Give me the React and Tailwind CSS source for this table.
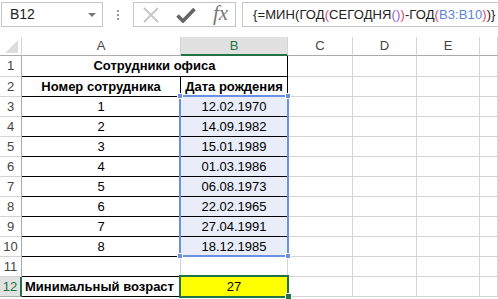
import React from "react";

// Spreadsheet view: formula bar + a small employee table with MIN(age) array formula
const colHeads = [
  { key: "A", w: "w-[159px]" },
  { key: "B", w: "w-[107px]", active: true },
  { key: "C", w: "w-[65px]" },
  { key: "D", w: "w-[64px]" },
  { key: "E", w: "w-[63px]" },
  { key: "", w: "flex-1" },
];

const people = [
  ["1", "12.02.1970"],
  ["2", "14.09.1982"],
  ["3", "15.01.1989"],
  ["4", "01.03.1986"],
  ["5", "06.08.1973"],
  ["6", "22.02.1965"],
  ["7", "27.04.1991"],
  ["8", "18.12.1985"],
];

const grid = "border-[#d4d4d4]";

function RowHead({ n, active }) {
  return (
    <div
      className={`w-[22px] shrink-0 flex items-center justify-center text-[13px] ${
        active
          ? "bg-[#e1e1e1] text-[#217346] border-r-2 border-r-[#217346] border-b border-b-[#ababab]"
          : "text-[#444] border-r border-b border-r-[#ababab] border-b-[#d4d4d4]"
      }`}
    >
      {n}
    </div>
  );
}

function Cell({ className = "", children }) {
  return (
    <div className={`shrink-0 flex items-center justify-center border-r border-b ${className}`}>
      {children}
    </div>
  );
}

function EmptyTail() {
  return (
    <>
      <Cell className={`w-[65px] ${grid}`} />
      <Cell className={`w-[64px] ${grid}`} />
      <Cell className={`w-[63px] ${grid}`} />
      <Cell className={`flex-1 ${grid}`} />
    </>
  );
}

function Formula() {
  const red = "text-[#e2436b]";
  return (
    <span className="text-[13px] text-[#222] whitespace-nowrap tracking-[0.1px]">
      {"{=МИН(ГОД"}
      <span className={red}>(</span>
      СЕГОДНЯ
      <span className="text-[#9b59d0]">()</span>
      <span className={red}>)</span>
      -ГОД
      <span className={red}>(</span>
      <span className="text-[#5b84e0]">B3:B10</span>
      <span className={red}>)</span>
      {")}"}
    </span>
  );
}

export default function App() {
  return (
    <div className="w-[498px] h-[299px] bg-white overflow-hidden font-['Liberation_Sans',sans-serif] text-black">
      {/* formula bar */}
      <div className="flex h-[25px] mt-[2px]">
        <div className="ml-[1px] w-[102px] border border-[#c6c6c6] flex items-center justify-between pl-[8px] pr-[6px]">
          <span className="text-[14px] text-[#222]">B12</span>
          <span className="w-0 h-0 border-l-[4px] border-r-[4px] border-t-[4px] border-l-transparent border-r-transparent border-t-[#777]" />
        </div>
        <div className="w-[30px] flex flex-col items-center justify-center gap-[2px]">
          <span className="w-[2px] h-[2px] bg-[#999]" />
          <span className="w-[2px] h-[2px] bg-[#999]" />
          <span className="w-[2px] h-[2px] bg-[#999]" />
        </div>
        <div className="w-[103px] border border-[#c6c6c6] flex items-center pl-[9px] gap-[17px]">
          <svg width="16" height="16" viewBox="0 0 16 16">
            <path d="M1 1L15 15M15 1L1 15" stroke="#c8c8c8" strokeWidth="2" fill="none" />
          </svg>
          <svg width="20" height="16" viewBox="0 0 20 16">
            <path d="M1.5 8.5L7 14L18.5 2" stroke="#666" strokeWidth="3.6" fill="none" />
          </svg>
          <span className="font-['Liberation_Serif',serif] italic text-[21px] leading-none text-[#777] -mt-[2px]">fx</span>
        </div>
        <div className="ml-[6px] flex-1 border border-r-0 border-[#c6c6c6] flex items-center pl-[10px]">
          <Formula />
        </div>
      </div>

      {/* sheet */}
      <div className="relative mt-[10px]">
        {/* column headers */}
        <div className="flex h-[19px]">
          <div className="w-[22px] shrink-0 border-r border-b border-r-[#d4d4d4] border-b-[#ababab] flex items-end justify-end pr-[3px] pb-[2px]">
            <svg width="13" height="13" viewBox="0 0 13 13">
              <path d="M13 0V13H0Z" fill="#dcdcdc" />
            </svg>
          </div>
          {colHeads.map((c) => (
            <div
              key={c.key || "tail"}
              className={`${c.w} shrink-0 flex items-center justify-center text-[13px] ${
                c.active
                  ? "bg-[#e1e1e1] text-[#217346] border-r border-r-[#d4d4d4] border-b-2 border-b-[#217346]"
                  : "text-[#444] border-r border-r-[#d4d4d4] border-b border-b-[#ababab]"
              }`}
            >
              {c.key}
            </div>
          ))}
        </div>

        {/* row 1: merged title */}
        <div className="flex h-[21px]">
          <RowHead n="1" />
          <Cell className="w-[266px] border-black font-bold text-[13px]">Сотрудники офиса</Cell>
          <EmptyTail />
        </div>

        {/* row 2: column titles */}
        <div className="flex h-[20px]">
          <RowHead n="2" />
          <Cell className="w-[159px] border-black font-bold text-[13px]">Номер сотрудника</Cell>
          <Cell className="w-[107px] border-black font-bold text-[13px]">Дата рождения</Cell>
          <EmptyTail />
        </div>

        {people.map(([num, date], i) => (
          <div key={num} className="flex h-[20px]">
            <RowHead n={String(i + 3)} />
            <Cell className="w-[159px] border-black text-[13px]">{num}</Cell>
            <Cell className="w-[107px] border-black bg-[#e8edf9] text-[13px]">{date}</Cell>
            <EmptyTail />
          </div>
        ))}

        <div className="flex h-[20px]">
          <RowHead n="11" />
          <Cell className={`w-[159px] ${grid} border-b-black`} />
          <Cell className={`w-[107px] ${grid}`} />
          <EmptyTail />
        </div>

        <div className="flex h-[20px]">
          <RowHead n="12" active />
          <Cell className="w-[159px] border-black font-bold text-[13px] !justify-start pl-[3px]">
            Минимальный возраст
          </Cell>
          <Cell className="w-[107px] border-black bg-[#ffff00] text-[13px]">27</Cell>
          <EmptyTail />
        </div>

        {/* referenced range B3:B10 */}
        <div className="absolute left-[179px] top-[58px] w-[110px] h-[162px] border-2 border-[#6b8fe3]" />
        <span className="absolute left-[177px] top-[56px] w-[6px] h-[6px] bg-[#6b8fe3] border border-white" />
        <span className="absolute left-[285px] top-[56px] w-[6px] h-[6px] bg-[#6b8fe3] border border-white" />
        <span className="absolute left-[177px] top-[216px] w-[6px] h-[6px] bg-[#6b8fe3] border border-white" />
        <span className="absolute left-[285px] top-[216px] w-[6px] h-[6px] bg-[#6b8fe3] border border-white" />

        {/* active cell B12 */}
        <div className="absolute left-[179px] top-[238px] w-[110px] h-[23px] border-2 border-[#217346]" />
        <span className="absolute left-[285px] top-[256px] w-[7px] h-[7px] bg-[#217346] border border-white" />
      </div>
    </div>
  );
}
